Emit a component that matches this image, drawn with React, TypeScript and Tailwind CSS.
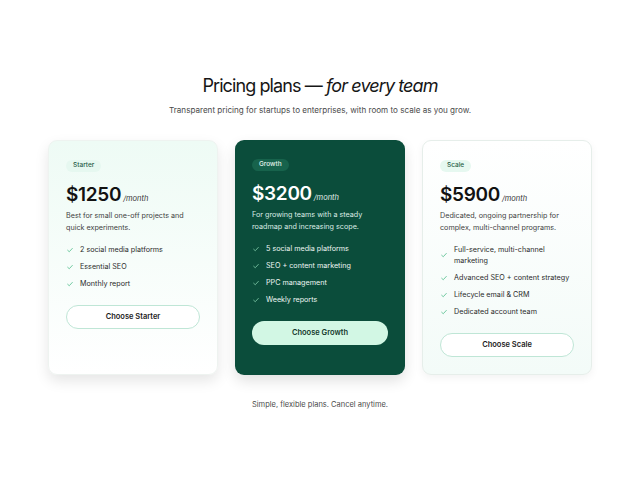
import * as React from "react";

interface Plan {
  name: string;
  price: string;
  blurb: string;
  features: string[];
  cta: string;
  featured?: boolean;
  tint: "top" | "bottom";
}

const plans: Plan[] = [
  {
    name: "Starter",
    price: "$1250",
    blurb: "Best for small one-off projects and quick experiments.",
    features: ["2 social media platforms", "Essential SEO", "Monthly report"],
    cta: "Choose Starter",
    tint: "top",
  },
  {
    name: "Growth",
    price: "$3200",
    blurb: "For growing teams with a steady roadmap and increasing scope.",
    features: [
      "5 social media platforms",
      "SEO + content marketing",
      "PPC management",
      "Weekly reports",
    ],
    cta: "Choose Growth",
    featured: true,
    tint: "top",
  },
  {
    name: "Scale",
    price: "$5900",
    blurb: "Dedicated, ongoing partnership for complex, multi-channel programs.",
    features: [
      "Full-service, multi-channel marketing",
      "Advanced SEO + content strategy",
      "Lifecycle email & CRM",
      "Dedicated account team",
    ],
    cta: "Choose Scale",
    tint: "bottom",
  },
];

const Check: React.FC<{ className?: string }> = ({ className }) => (
  <svg viewBox="0 0 12 12" className={className} fill="none">
    <path
      d="M2.5 6.4 L4.9 8.6 L9.5 3.6"
      stroke="currentColor"
      strokeWidth="1.1"
      strokeLinecap="round"
      strokeLinejoin="round"
    />
  </svg>
);

const PlanCard: React.FC<{ plan: Plan }> = ({ plan }) => {
  const dark = plan.featured;
  const surface = dark
    ? "bg-[#0b4d3b] shadow-[0_6px_14px_rgba(0,0,0,0.12)]"
    : plan.tint === "top"
      ? "bg-gradient-to-b from-[#eefbf5] to-white border border-[#eef3f0] shadow-[0_6px_14px_rgba(0,0,0,0.10)]"
      : "bg-gradient-to-b from-white to-[#f3fbf8] border border-[#e6eeea] shadow-[0_3px_8px_rgba(0,0,0,0.05)]";

  return (
    <div className={`flex flex-col rounded-[9px] px-[17px] pt-[19px] pb-[17px] ${surface}`}>
      <span
        className={`self-start rounded-full px-[7px] h-[12px] flex items-center text-[6.5px] font-medium ${
          dark ? "bg-[#17634c] text-[#e6f5ee]" : "bg-[#e6f8f0] text-[#1f5c46]"
        }`}
      >
        {plan.name}
      </span>

      <div className="mt-[12px] flex items-baseline gap-[2px] leading-[22px]">
        <span
          className={`text-[19px] font-semibold tracking-[-0.3px] ${
            dark ? "text-white" : "text-[#121212]"
          }`}
        >
          {plan.price}
        </span>
        <span className={`text-[7.5px] italic ${dark ? "text-[#e3f1eb]" : "text-[#333]"}`}>
          /month
        </span>
      </div>

      <p
        className={`text-[7.2px] leading-[12px] ${
          dark ? "text-[#dbece5]" : "text-[#3f3f3f]"
        }`}
      >
        {plan.blurb}
      </p>

      <ul className="mt-[10px] flex flex-col gap-[6px]">
        {plan.features.map((f) => (
          <li
            key={f}
            className={`flex items-center gap-[6px] text-[7.2px] leading-[11px] ${
              dark ? "text-[#eef7f3]" : "text-[#2b2b2b]"
            }`}
          >
            <Check
              className={`w-[8px] h-[8px] shrink-0 ${dark ? "text-[#8fdcb6]" : "text-[#3fb77f]"}`}
            />
            <span>{f}</span>
          </li>
        ))}
      </ul>

      <button
        className={`mt-[16px] h-[24px] w-full rounded-full text-[7.5px] font-semibold ${
          dark
            ? "bg-[#d2f7e4] text-[#13382b]"
            : "bg-white border border-[#bfe6d6] text-[#1c1c1c]"
        }`}
      >
        {plan.cta}
      </button>
    </div>
  );
};

export default function App() {
  return (
    <main
      className="min-h-[480px] w-[640px] bg-white flex flex-col items-center pt-[74px]"
      style={{ fontFamily: "Inter, 'Noto Sans', sans-serif" }}
    >
      <h1 className="text-[18px] leading-[24px] tracking-[-0.9px] text-[#161616]">
        Pricing plans — <span className="italic">for every team</span>
      </h1>
      <p className="mt-[6px] text-[8.1px] leading-[12px] text-[#4a4a4a]">
        Transparent pricing for startups to enterprises, with room to scale as you grow.
      </p>

      <div className="mt-[24px] grid grid-cols-[170px_170px_170px] gap-[17px]">
        {plans.map((p) => (
          <PlanCard key={p.name} plan={p} />
        ))}
      </div>

      <p className="mt-[24px] text-[7.5px] leading-[12px] text-[#4a4a4a]">
        Simple, flexible plans. Cancel anytime.
      </p>
    </main>
  );
}
